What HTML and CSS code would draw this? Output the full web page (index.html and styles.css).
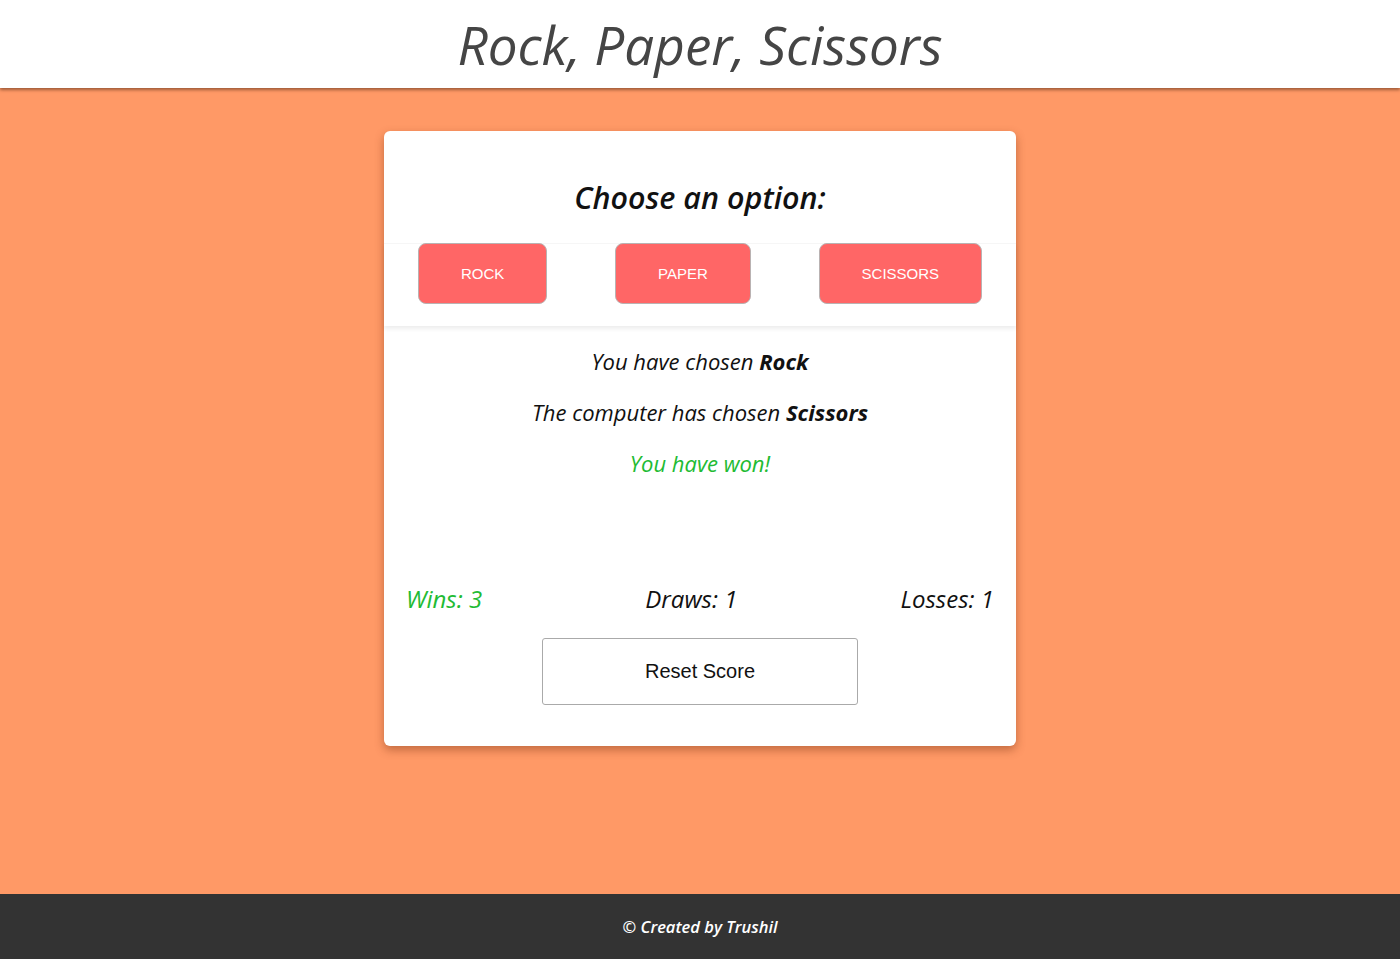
FILE: index.html
```html
<!DOCTYPE html>
<html lang="en">
<head>
<meta charset="utf-8">
<title>Rock, Paper, Scissors</title>
<link rel="stylesheet" href="styles.css">
</head>
<body>
<header class="site-header">
  <h1 class="site-title">Rock, Paper, Scissors</h1>
</header>
<main class="main">
  <section class="card">
    <h2 class="card-title">Choose an option:</h2>
    <div class="options">
      <button class="option-btn">ROCK</button>
      <button class="option-btn">PAPER</button>
      <button class="option-btn">SCISSORS</button>
    </div>
    <div class="results">
      <p class="result-line">You have chosen <strong>Rock</strong></p>
      <p class="result-line">The computer has chosen <strong>Scissors</strong></p>
      <p class="result-line win">You have won!</p>
    </div>
    <div class="scores">
      <span class="score win">Wins: 3</span>
      <span class="score">Draws: 1</span>
      <span class="score">Losses: 1</span>
    </div>
    <div class="reset-wrap">
      <button class="reset-btn">Reset Score</button>
    </div>
  </section>
</main>
<footer class="site-footer">
  <p class="footer-text">© Created by Trushil</p>
</footer>
</body>
</html>
```

FILE: styles.css
```css
* { box-sizing: border-box; }
html, body { height: 100%; }
body {
  margin: 0;
  background: #ff9966;
  font-family: "Open Sans", "DejaVu Sans", sans-serif;
  display: flex;
  flex-direction: column;
}
.site-header {
  background: #fff;
  height: 88px;
  display: flex;
  align-items: center;
  justify-content: center;
  box-shadow: 0 2px 3px rgba(80, 40, 20, 0.55);
  position: relative;
  z-index: 1;
}
.site-title {
  margin: 0;
  font-size: 53px;
  font-weight: 400;
  font-style: italic;
  color: #454545;
}
.main {
  flex: 1;
  display: flex;
  justify-content: center;
  align-items: flex-start;
  padding-top: 43px;
}
.card {
  width: 632px;
  background: #fff;
  border-radius: 6px;
  box-shadow: 0 4px 10px rgba(120, 50, 20, 0.45);
  padding: 40px 0 41px;
}
.card-title {
  margin: 0 0 20px;
  text-align: center;
  font-size: 30.5px;
  font-weight: 600;
  font-style: italic;
  color: #111;
  line-height: 52px;
}
.options {
  display: flex;
  justify-content: space-around;
  padding: 0 0 22px;
  border-top: 1px solid #f6f6f6;
  box-shadow: 0 3px 4px rgba(0, 0, 0, 0.07);
}
.option-btn {
  height: 61px;
  padding: 0 42px;
  background: #ff6666;
  border: 1px solid #b9b2b2;
  border-radius: 8px;
  color: #fff;
  font-family: "Liberation Sans", Arial, sans-serif;
  font-size: 15px;
  margin-top: -1px;
}
.results {
  padding-top: 20px;
  height: 260px;
}
.result-line {
  margin: 0 0 21px;
  text-align: center;
  font-size: 22px;
  font-style: italic;
  line-height: 30px;
  color: #111;
}
.result-line strong { font-weight: 700; }
.win { color: #22bb33 !important; }
.scores {
  display: flex;
  justify-content: space-between;
  padding: 0 22px;
  margin-top: -4px;
}
.score {
  font-size: 24px;
  font-style: italic;
  color: #111;
  line-height: 34px;
}
.reset-wrap {
  display: flex;
  justify-content: center;
  margin-top: 22px;
}
.reset-btn {
  width: 316px;
  height: 67px;
  background: #fff;
  border: 1px solid #aaa;
  border-radius: 3px;
  font-family: "Liberation Sans", Arial, sans-serif;
  font-size: 20px;
  color: #111;
}
.site-footer {
  background: #333;
  height: 65px;
  display: flex;
  align-items: center;
  justify-content: center;
}
.footer-text {
  margin: 0;
  color: #fff;
  font-size: 16.5px;
  font-style: italic;
  font-weight: 600;
}
```
